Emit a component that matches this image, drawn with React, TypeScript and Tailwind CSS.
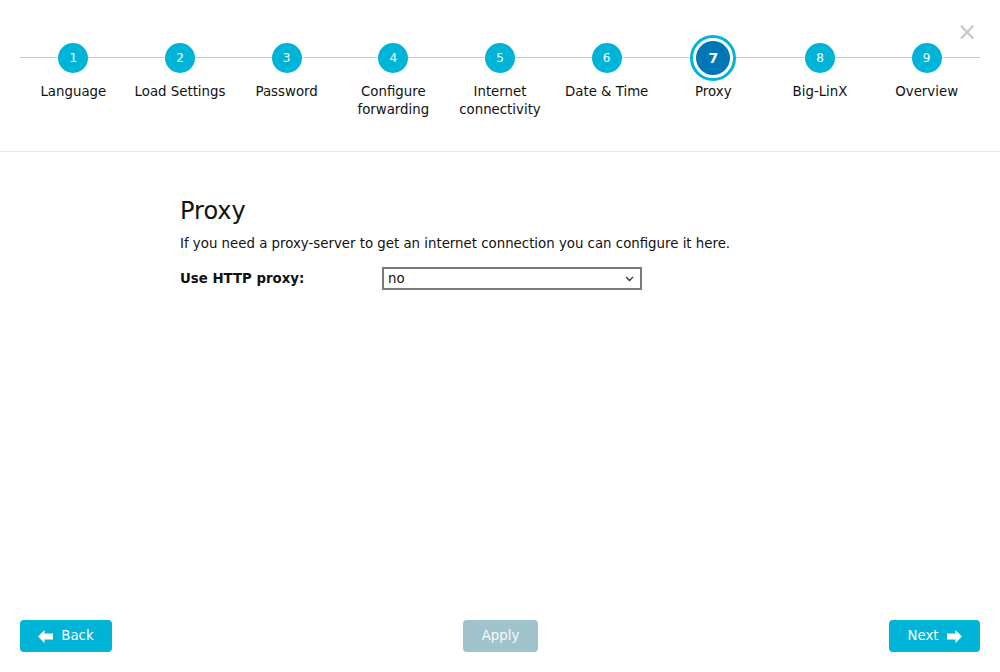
import React from 'react';

const steps = [
  { n: 1, label: ['Language'] },
  { n: 2, label: ['Load Settings'] },
  { n: 3, label: ['Password'] },
  { n: 4, label: ['Configure', 'forwarding'] },
  { n: 5, label: ['Internet', 'connectivity'] },
  { n: 6, label: ['Date & Time'] },
  { n: 7, label: ['Proxy'] },
  { n: 8, label: ['Big-LinX'] },
  { n: 9, label: ['Overview'] },
];

const ArrowLeft = () => (
  <svg width="15" height="13" viewBox="0 0 15 13" fill="currentColor">
    <path d="M0 6.5 L6.5 0 L6.5 3.5 L15 3.5 L15 9.5 L6.5 9.5 L6.5 13 Z" />
  </svg>
);

const ArrowRight = () => (
  <svg width="15" height="13" viewBox="0 0 15 13" fill="currentColor">
    <path d="M15 6.5 L8.5 0 L8.5 3.5 L0 3.5 L0 9.5 L8.5 9.5 L8.5 13 Z" />
  </svg>
);

export default function App() {
  const active = 7;
  return (
    <div
      className="relative flex h-[672px] w-[1000px] flex-col bg-white text-[#111]"
      style={{ fontFamily: '"DejaVu Sans", Verdana, sans-serif' }}
    >
      <button className="absolute right-[23px] top-[20px] text-[24px] leading-none text-[#c8c8c8]">
        ×
      </button>

      <div className="h-[152px] border-b border-[#e6e6e6] px-5 pt-[35px]">
        <div className="relative">
          <div className="absolute left-0 right-0 top-[22px] h-px bg-[#cccccc]" />
          <div className="relative grid grid-cols-9">
            {steps.map((s) => (
              <div key={s.n} className="flex flex-col items-center">
                <div className="flex h-[46px] w-[46px] items-center justify-center">
                  {s.n === active ? (
                    <div className="flex h-[46px] w-[46px] items-center justify-center rounded-full border-[3px] border-[#00b4d8] bg-white">
                      <div className="flex h-[34px] w-[34px] items-center justify-center rounded-full bg-[#0077b5] text-[14px] font-bold text-white">
                        {s.n}
                      </div>
                    </div>
                  ) : (
                    <div className="flex h-[30px] w-[30px] items-center justify-center rounded-full bg-[#00b4d8] text-[12px] text-white">
                      {s.n}
                    </div>
                  )}
                </div>
                <div className="mt-[2px] text-center text-[13.33px] leading-[17.5px]">
                  {s.label.map((l) => (
                    <div key={l}>{l}</div>
                  ))}
                </div>
              </div>
            ))}
          </div>
        </div>
      </div>

      <div className="flex-1 px-[180px] pt-[44px]">
        <h1 className="text-[24px] leading-[30px]">Proxy</h1>
        <p className="mt-[9px] text-[13.33px] leading-[18px]">
          If you need a proxy-server to get an internet connection you can configure it here.
        </p>
        <div className="mt-[14px] flex items-center">
          <label className="w-[202px] text-[13.33px] font-bold">Use HTTP proxy:</label>
          <div className="relative flex h-[23px] w-[260px] items-center border-2 border-[#7a7a7a] bg-white pl-[4px] text-[13.33px]">
            no
            <svg className="absolute right-[6px] top-[7px]" width="9" height="6" viewBox="0 0 9 6">
              <path d="M1 1 L4.5 4.5 L8 1" stroke="#333" strokeWidth="1.3" fill="none" />
            </svg>
          </div>
        </div>
      </div>

      <div className="flex items-center justify-between px-5 pb-[20px]">
        <button className="flex h-[32px] w-[92px] items-center justify-center gap-[8px] rounded-[4px] bg-[#00b4d8] text-[13.33px] text-white">
          <ArrowLeft />
          Back
        </button>
        <button className="flex h-[32px] w-[75px] items-center justify-center rounded-[4px] bg-[#a0c3cb] text-[13.33px] text-white/90">
          Apply
        </button>
        <button className="flex h-[32px] w-[91px] items-center justify-center gap-[8px] rounded-[4px] bg-[#00b4d8] text-[13.33px] text-white">
          Next
          <ArrowRight />
        </button>
      </div>
    </div>
  );
}
